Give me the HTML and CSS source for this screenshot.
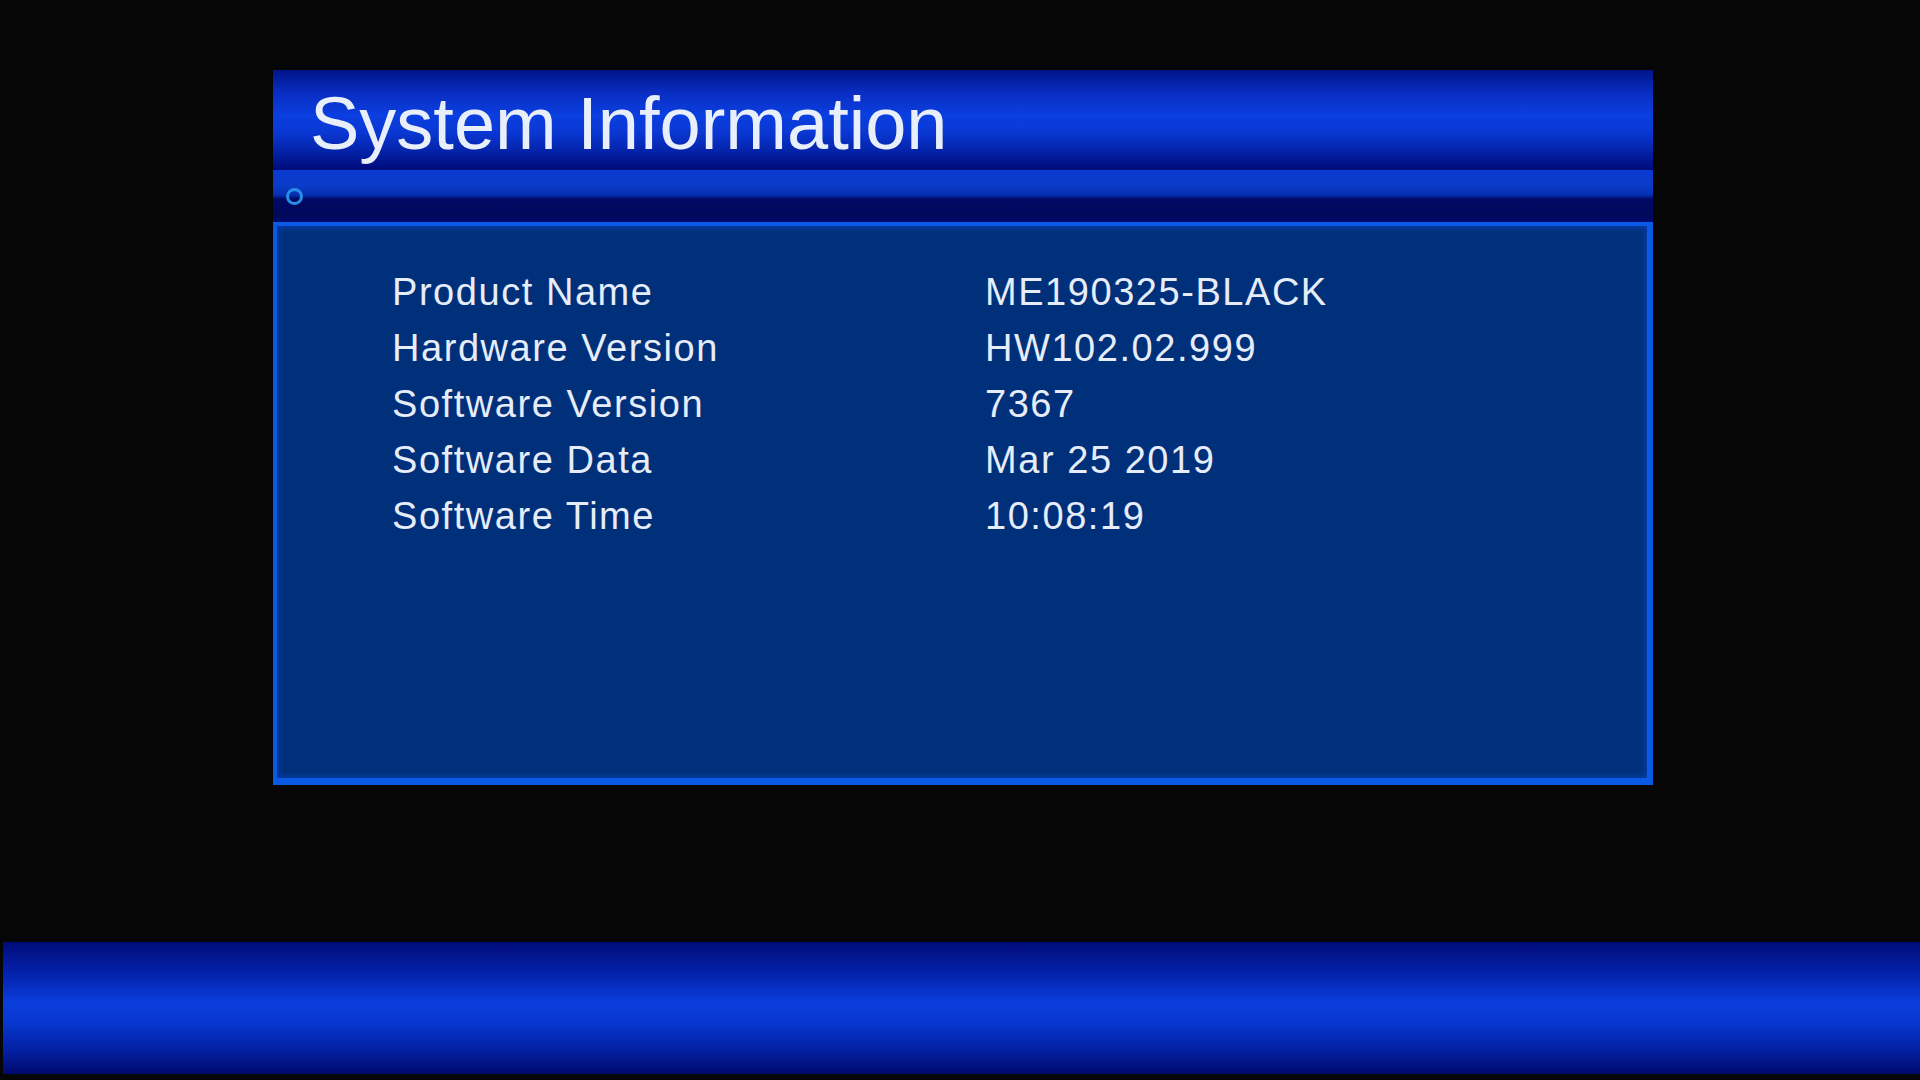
FILE: index.html
```html
<!DOCTYPE html>
<html lang="en">
<head>
<meta charset="utf-8">
<title>System Information</title>
<link rel="stylesheet" href="styles.css">
</head>
<body>
<div class="screen">
  <div class="window">
    <div class="titlebar">
      <h1 class="title">System Information</h1>
    </div>
    <div class="subbar">
      <span class="ring"></span>
    </div>
    <div class="content">
      <div class="info">
        <div class="label">Product Name</div><div class="value">ME190325-BLACK</div>
        <div class="label">Hardware Version</div><div class="value">HW102.02.999</div>
        <div class="label">Software Version</div><div class="value">7367</div>
        <div class="label">Software Data</div><div class="value">Mar 25 2019</div>
        <div class="label">Software Time</div><div class="value">10:08:19</div>
      </div>
    </div>
  </div>
  <div class="footer"></div>
</div>
</body>
</html>
```
FILE: styles.css
```css
html, body {
  margin: 0;
  padding: 0;
  background: #060606;
}

.screen {
  width: 1920px;
  height: 1080px;
  display: flex;
  flex-direction: column;
  background: #060606;
  font-family: "Liberation Sans", Arial, sans-serif;
  color: #e6ecf8;
  overflow: hidden;
}

.window {
  margin: 70px 0 0 273px;
  width: 1380px;
  display: flex;
  flex-direction: column;
}

.titlebar {
  height: 100px;
  box-sizing: border-box;
  padding: 17px 0 0 37px;
  background: linear-gradient(to bottom,
    #001488 0%,
    #0a2cc0 22%,
    #0b3fe0 45%,
    #0a38d4 62%,
    #0422a8 82%,
    #000a78 100%);
}

.title {
  margin: 0;
  font-size: 74px;
  line-height: 74px;
  font-weight: normal;
  color: #e8eefa;
}

.subbar {
  height: 52px;
  display: flex;
  align-items: center;
  padding-left: 13px;
  box-sizing: border-box;
  background: linear-gradient(to bottom,
    #0a3ad0 0%,
    #0a3cc8 30%,
    #0630b0 48%,
    #000a66 56%,
    #00085a 88%,
    #000a70 100%);
}

.ring {
  width: 11px;
  height: 11px;
  border: 3.5px solid #2a8ee6;
  border-radius: 50%;
}

.content {
  height: 563px;
  box-sizing: border-box;
  border-style: solid;
  border-color: #0a5ae6;
  border-width: 4px 6px 7px 4px;
  background: #00307a;
  box-shadow: inset 0 0 6px 1px #0640b8;
  padding: 38px 0 0 115px;
}

.info {
  display: grid;
  grid-template-columns: 593px auto;
  grid-auto-rows: 56px;
  font-size: 38px;
  line-height: 56px;
  letter-spacing: 1.55px;
}

.label,
.value {
  white-space: nowrap;
}

.footer {
  margin: 157px 0 0 3px;
  height: 132px;
  background: linear-gradient(to bottom,
    #000c78 0%,
    #0420a8 22%,
    #0a3ddc 46%,
    #0838d0 60%,
    #0422a8 80%,
    #000a6e 100%);
}
```
